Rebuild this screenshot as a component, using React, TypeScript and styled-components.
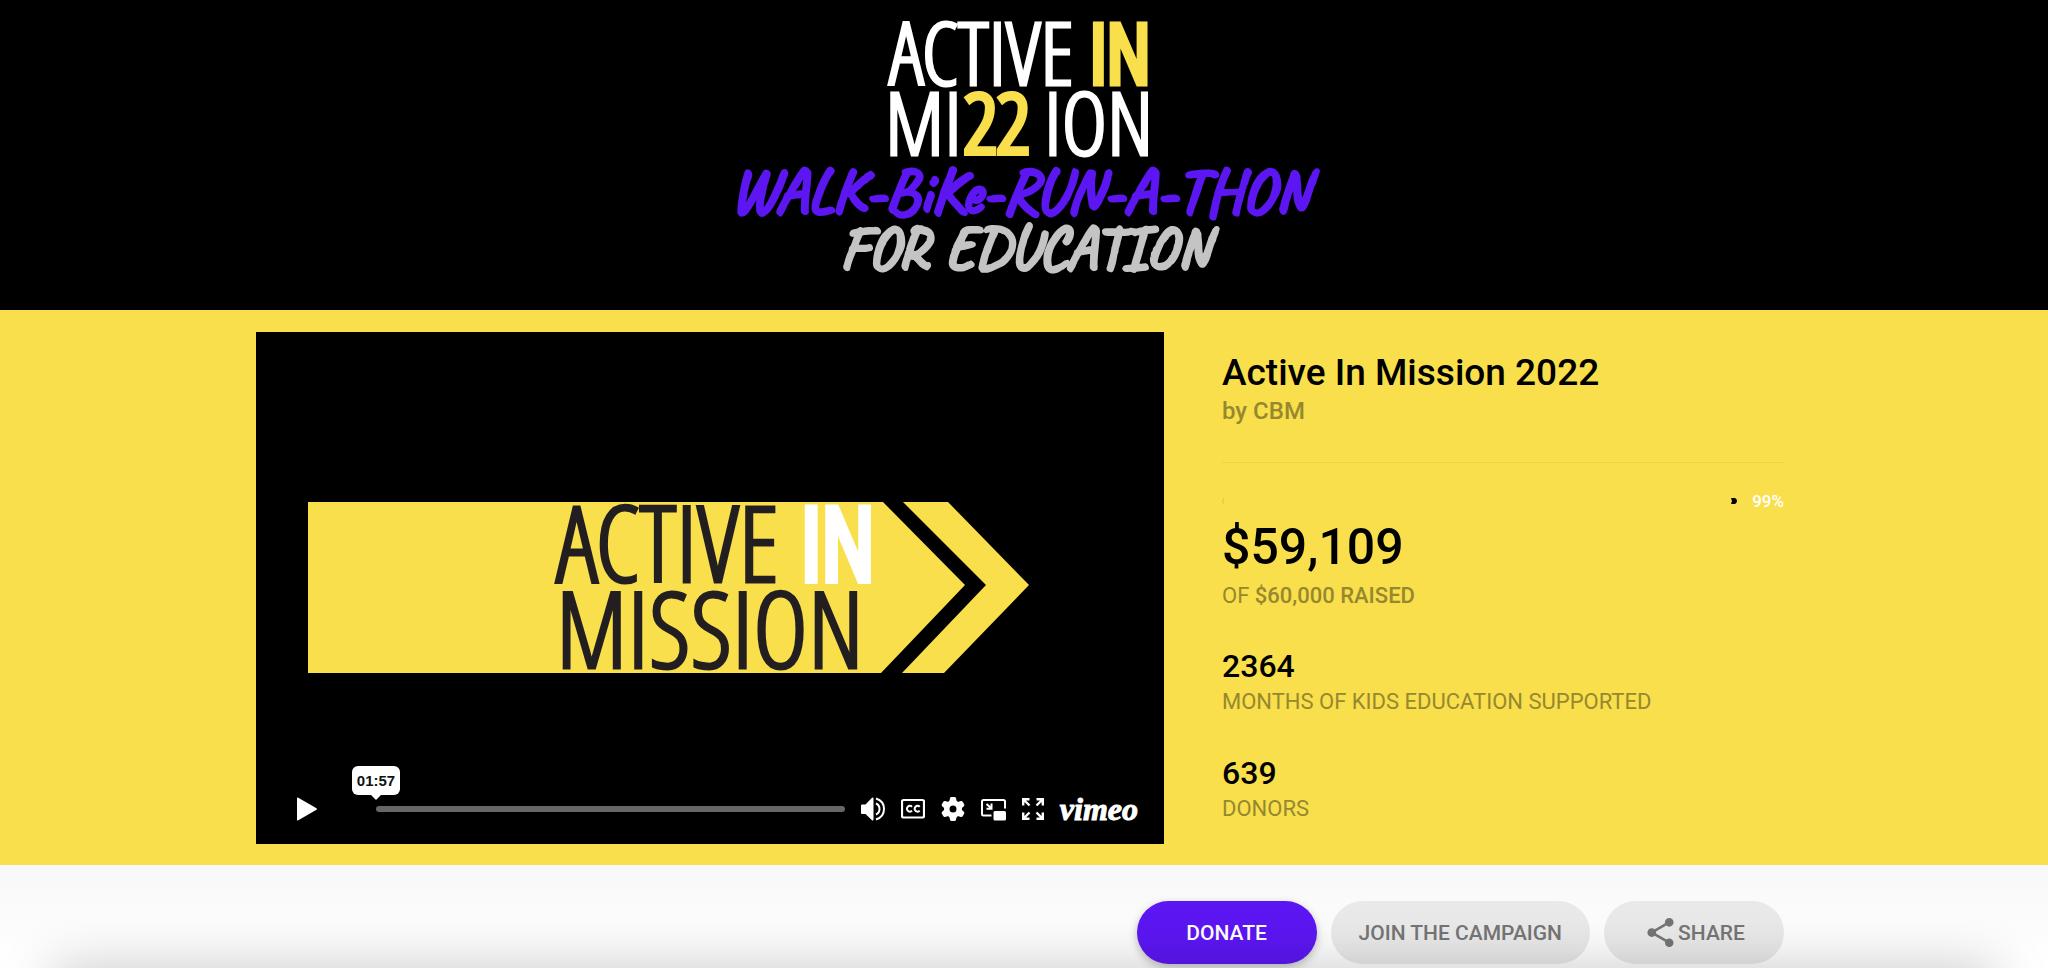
import React from "react";
import styled, { createGlobalStyle } from "styled-components";
import { MdShare } from "react-icons/md";

const yellow = "#f9df4b";
const violet = "#5c16f2";
const muted = "#96882f";
const condensed = '"Open Sans Condensed Light", "Open Sans Condensed", "Roboto Condensed", sans-serif';
const brush = '"Caveat", "Comic Neue", "Lato", cursive';

const GlobalStyle = createGlobalStyle`
  *, *::before, *::after { box-sizing: border-box; }
  body {
    margin: 0;
    background: #fff;
    color: #000;
    font-family: Roboto, "Liberation Sans", sans-serif;
  }
  h1, p, dl, dt, dd { margin: 0; }
`;

const Header = styled.header`
  display: flex;
  justify-content: center;
  background: #000;
`;

const Logo = styled.svg`
  display: block;
  width: 620px;
  max-width: 100%;
  height: auto;
`;

const LogoText = styled.text<{ $size: number; $ink: string; $weight: number }>`
  font-family: ${condensed};
  font-size: ${(p) => p.$size}px;
  font-weight: 300;
  fill: ${(p) => p.$ink};
  stroke: ${(p) => p.$ink};
  stroke-width: ${(p) => p.$weight}px;
`;

const BrushText = styled.text<{ $size: number }>`
  font-family: ${brush};
  font-size: ${(p) => p.$size}px;
  font-weight: 400;
  text-anchor: middle;
  stroke-width: 4px;
  stroke-linejoin: round;
`;

const Hero = styled.main`
  padding: 22px 8px 21px 0;
  background: ${yellow};
`;

const Container = styled.div`
  width: 100%;
  max-width: 1528px;
  margin: 0 auto;
`;

const Columns = styled(Container)`
  display: grid;
  grid-template-columns: 908fr 562fr;
  gap: 58px;
`;

const Player = styled.section`
  position: relative;
  align-self: start;
  background: #000;
`;

const Poster = styled.svg`
  display: block;
  width: 100%;
  height: auto;
`;

const Controls = styled.div`
  position: absolute;
  inset: auto 0 0 0;
  display: flex;
  align-items: center;
  height: 70px;
  padding: 0 26px 0 39px;
  color: #fff;
`;

const IconButton = styled.button`
  display: block;
  flex: none;
  width: 24px;
  height: 24px;
  margin: 0 0 0 16px;
  padding: 0;
  border: 0;
  background: none;
  color: inherit;
  svg { display: block; }
`;

const PlayButton = styled(IconButton)`
  margin: 0 57px 0 0;
`;

const Seek = styled.div`
  position: relative;
  flex: 1;
  height: 6px;
  border-radius: 3px;
  background: #666;
`;

const TimeTip = styled.span`
  position: absolute;
  bottom: 17px;
  left: 0;
  width: 48px;
  margin-left: -24px;
  border-radius: 6px;
  background: #fff;
  color: #111;
  font: 700 15px/29px "Liberation Sans", sans-serif;
  text-align: center;
  &::after {
    content: "";
    position: absolute;
    top: 100%;
    left: 50%;
    margin-left: -5px;
    border: 5px solid transparent;
    border-top-color: #fff;
    border-bottom: 0;
  }
`;

const VimeoLink = styled.a`
  flex: none;
  margin-left: 15px;
  color: #fff;
  text-decoration: none;
  font: italic 700 32px/32px "Liberation Serif", serif;
  -webkit-text-stroke: 1px #fff;
`;

const Info = styled.section`
  padding-top: 19px;
`;

const Title = styled.h1`
  font-size: 37px;
  font-weight: 500;
  line-height: 44px;
`;

const Byline = styled.p`
  color: ${muted};
  font-size: 24px;
  font-weight: 500;
  line-height: 32px;
`;

const Divider = styled.hr`
  height: 1px;
  margin: 35px 0 26px;
  border: 0;
  background: #ecd246;
`;

const Progress = styled.div`
  display: flex;
  align-items: center;
  gap: 15px;
  color: #fff;
  font-size: 17px;
  font-weight: 500;
  line-height: 24px;
`;

const Track = styled.div`
  display: flex;
  flex: 1;
  justify-content: space-between;
`;

const Amount = styled.p`
  margin-top: 4px;
  font-size: 50px;
  font-weight: 500;
  line-height: 60px;
`;

const Label = styled.p`
  margin-top: 5px;
  color: ${muted};
  font-size: 22px;
  line-height: 28px;
  text-transform: uppercase;
  b { font-weight: 500; }
`;

const Stats = styled.dl`
  display: flex;
  flex-direction: column;
  gap: 37px;
  margin-top: 36px;
`;

const Stat = styled.div`
  display: flex;
  flex-direction: column-reverse;
`;

const StatValue = styled.dd`
  font-size: 32px;
  font-weight: 500;
  line-height: 40px;
`;

const StatLabel = styled(Label).attrs({ as: "dt" })`
  margin-top: 2px;
`;

const ActionBar = styled.footer`
  position: relative;
  overflow: hidden;
  padding: 36px 8px 4px 0;
  background: linear-gradient(#f8f8f8, #fcfcfc 60%, #fff);
  &::after {
    content: "";
    position: absolute;
    top: 100%;
    left: 52px;
    right: 52px;
    height: 200px;
    box-shadow: 0 0 50px rgba(0, 0, 0, 0.22);
    pointer-events: none;
  }
`;

const Actions = styled(Container)`
  display: flex;
  justify-content: flex-end;
  gap: 14px;
`;

const ActionButton = styled.button<{ $primary?: boolean }>`
  display: flex;
  align-items: center;
  justify-content: center;
  min-width: 180px;
  height: 63px;
  padding: 0 28px;
  border: 0;
  border-radius: 32px;
  background: ${(p) => (p.$primary ? violet : "#e9e9e9")};
  box-shadow: ${(p) => (p.$primary ? "0 3px 8px rgba(0, 0, 0, 0.25)" : "none")};
  color: ${(p) => (p.$primary ? "#fff" : "#757575")};
  font: 500 21px/24px Roboto, "Liberation Sans", sans-serif;
  text-transform: uppercase;
`;

const VolumeIcon = () => (
  <svg width="24" height="24" viewBox="0 0 24 24" fill="none" stroke="currentColor" strokeWidth="2">
    <path d="M0 8.500Q0 7.500 1 7.500H4.500L11 .8Q12.500 0 12.500 1.500V22.500Q12.500 24 11 23.200L4.500 17H1Q0 17 0 16Z" fill="currentColor" stroke="none" />
    <path d="M15 6.500Q18.500 8 18.500 12T15 17.500M15 1.500Q23 4 23 12T15 22.500" />
  </svg>
);

const CaptionsIcon = () => (
  <svg width="24" height="24" viewBox="0 0 24 24" fill="none" stroke="currentColor" strokeWidth="2">
    <rect x="1" y="3" width="22" height="17.500" rx="1.500" strokeWidth="2.200" />
    <path d="M11 9.800A2.900 2.900 0 1 0 11 13.700M18.700 9.800A2.900 2.900 0 1 0 18.700 13.700" />
  </svg>
);

const GearIcon = () => (
  <svg width="24" height="24" viewBox="0 0 24 24">
    <g fill="currentColor">
      <path fillRule="evenodd" d="M12 3a9 9 0 1 0 0 18a9 9 0 1 0 0-18ZM12 8.500a3.500 3.500 0 1 1 0 7a3.500 3.500 0 1 1 0-7Z" />
      {[0, 60, 120, 180, 240, 300].map((a) => (
        <path key={a} d="M8.200 5.200L9 1.200Q9.300 0 10.500 0H13.500Q14.700 0 15 1.200L15.800 5.200Z" transform={`rotate(${a} 12 12)`} />
      ))}
    </g>
  </svg>
);

const PipIcon = () => (
  <svg width="25" height="24" viewBox="0 0 25 24" fill="none" stroke="currentColor" strokeWidth="2">
    <path d="M10.500 18.500H2.500Q1 18.500 1 17V4.500Q1 3 2.500 3H22.500Q24 3 24 4.500V11.500" />
    <rect x="12.500" y="14" width="12.500" height="9.500" rx="1.500" fill="currentColor" stroke="none" />
    <path d="M5.500 7L10 11M10.500 6.500V11.700H5.500" />
  </svg>
);

const FullscreenIcon = () => (
  <svg width="24" height="24" viewBox="0 0 24 24" fill="none" stroke="currentColor" strokeWidth="2.400">
    {[0, 90, 180, 270].map((a) => (
      <path key={a} d="M2.200 8.500V2.200H8.500M2.500 2.500L8.500 8.500" transform={`rotate(${a} 12 12)`} />
    ))}
  </svg>
);

export default function App() {
  return (
    <>
      <GlobalStyle />
      <Header>
        <Logo viewBox="0 0 620 310" role="img" aria-label="Active In Mission 22">
          <LogoText x="175" y="85" $size={87} $ink="#fff" $weight={3}>ACTIVE</LogoText>
          <LogoText x="376" y="83" $size={82} $ink={yellow} $weight={7}>IN</LogoText>
          <LogoText x="171" y="155" $size={87} $ink="#fff" $weight={3}>MI</LogoText>
          <LogoText x="250" y="153" $size={82} $ink={yellow} $weight={6}>22</LogoText>
          <LogoText x="330" y="155" $size={87} $ink="#fff" $weight={3}>ION</LogoText>
          <BrushText x="306" y="212" $size={64} fill={violet} stroke={violet}>WALK-BiKe-RUN-A-THON</BrushText>
          <BrushText x="311" y="268" $size={60} fill="#c4c4c4" stroke="#c4c4c4">FOR EDUCATION</BrushText>
        </Logo>
      </Header>

      <Hero>
        <Columns>
          <Player aria-label="Video player">
            <Poster viewBox="0 0 908 512" role="img" aria-label="Active In Mission">
              <path d="M52 170H627L709 253L625 341H52ZM647 170H692L773 253L688 341H646L730 253Z" fill={yellow} />
              <LogoText x="300" y="250" $size={105} $ink="#231f20" $weight={3}>ACTIVE</LogoText>
              <LogoText x="545" y="248" $size={100} $ink="#fff" $weight={8}>IN</LogoText>
              <LogoText x="300" y="336" $size={105} $ink="#231f20" $weight={3}>MISSION</LogoText>
            </Poster>
            <Controls>
              <PlayButton aria-label="Play">
                <svg width="24" height="24" viewBox="0 0 24 24">
                  <path d="M2 1.500Q2 0 3.300 .7L21.500 11.200Q22.500 12 21.500 12.800L3.300 23.300Q2 24 2 22.500Z" fill="currentColor" />
                </svg>
              </PlayButton>
              <Seek>
                <TimeTip>01:57</TimeTip>
              </Seek>
              <IconButton aria-label="Volume"><VolumeIcon /></IconButton>
              <IconButton aria-label="Captions"><CaptionsIcon /></IconButton>
              <IconButton aria-label="Settings"><GearIcon /></IconButton>
              <IconButton aria-label="Picture in picture"><PipIcon /></IconButton>
              <IconButton aria-label="Fullscreen"><FullscreenIcon /></IconButton>
              <VimeoLink href="#vimeo">vimeo</VimeoLink>
            </Controls>
          </Player>

          <Info>
            <Title>Active In Mission 2022</Title>
            <Byline>by CBM</Byline>
            <Divider />
            <Progress>
              <Track>
                <svg width="2" height="6" viewBox="0 0 2 6"><path d="M2 0Q-1 3 2 6" fill="none" stroke="#d9c242" /></svg>
                <svg width="6" height="6" viewBox="0 0 6 6"><path d="M0 0H4Q6 1 6 3T4 6H0L1 3Z" /></svg>
              </Track>
              99%
            </Progress>
            <Amount>$59,109</Amount>
            <Label>of <b>$60,000 raised</b></Label>
            <Stats>
              <Stat>
                <StatLabel>Months of kids education supported</StatLabel>
                <StatValue>2364</StatValue>
              </Stat>
              <Stat>
                <StatLabel>Donors</StatLabel>
                <StatValue>639</StatValue>
              </Stat>
            </Stats>
          </Info>
        </Columns>
      </Hero>

      <ActionBar>
        <Actions>
          <ActionButton $primary>Donate</ActionButton>
          <ActionButton>Join the campaign</ActionButton>
          <ActionButton><MdShare size={35} aria-hidden />Share</ActionButton>
        </Actions>
      </ActionBar>
    </>
  );
}
